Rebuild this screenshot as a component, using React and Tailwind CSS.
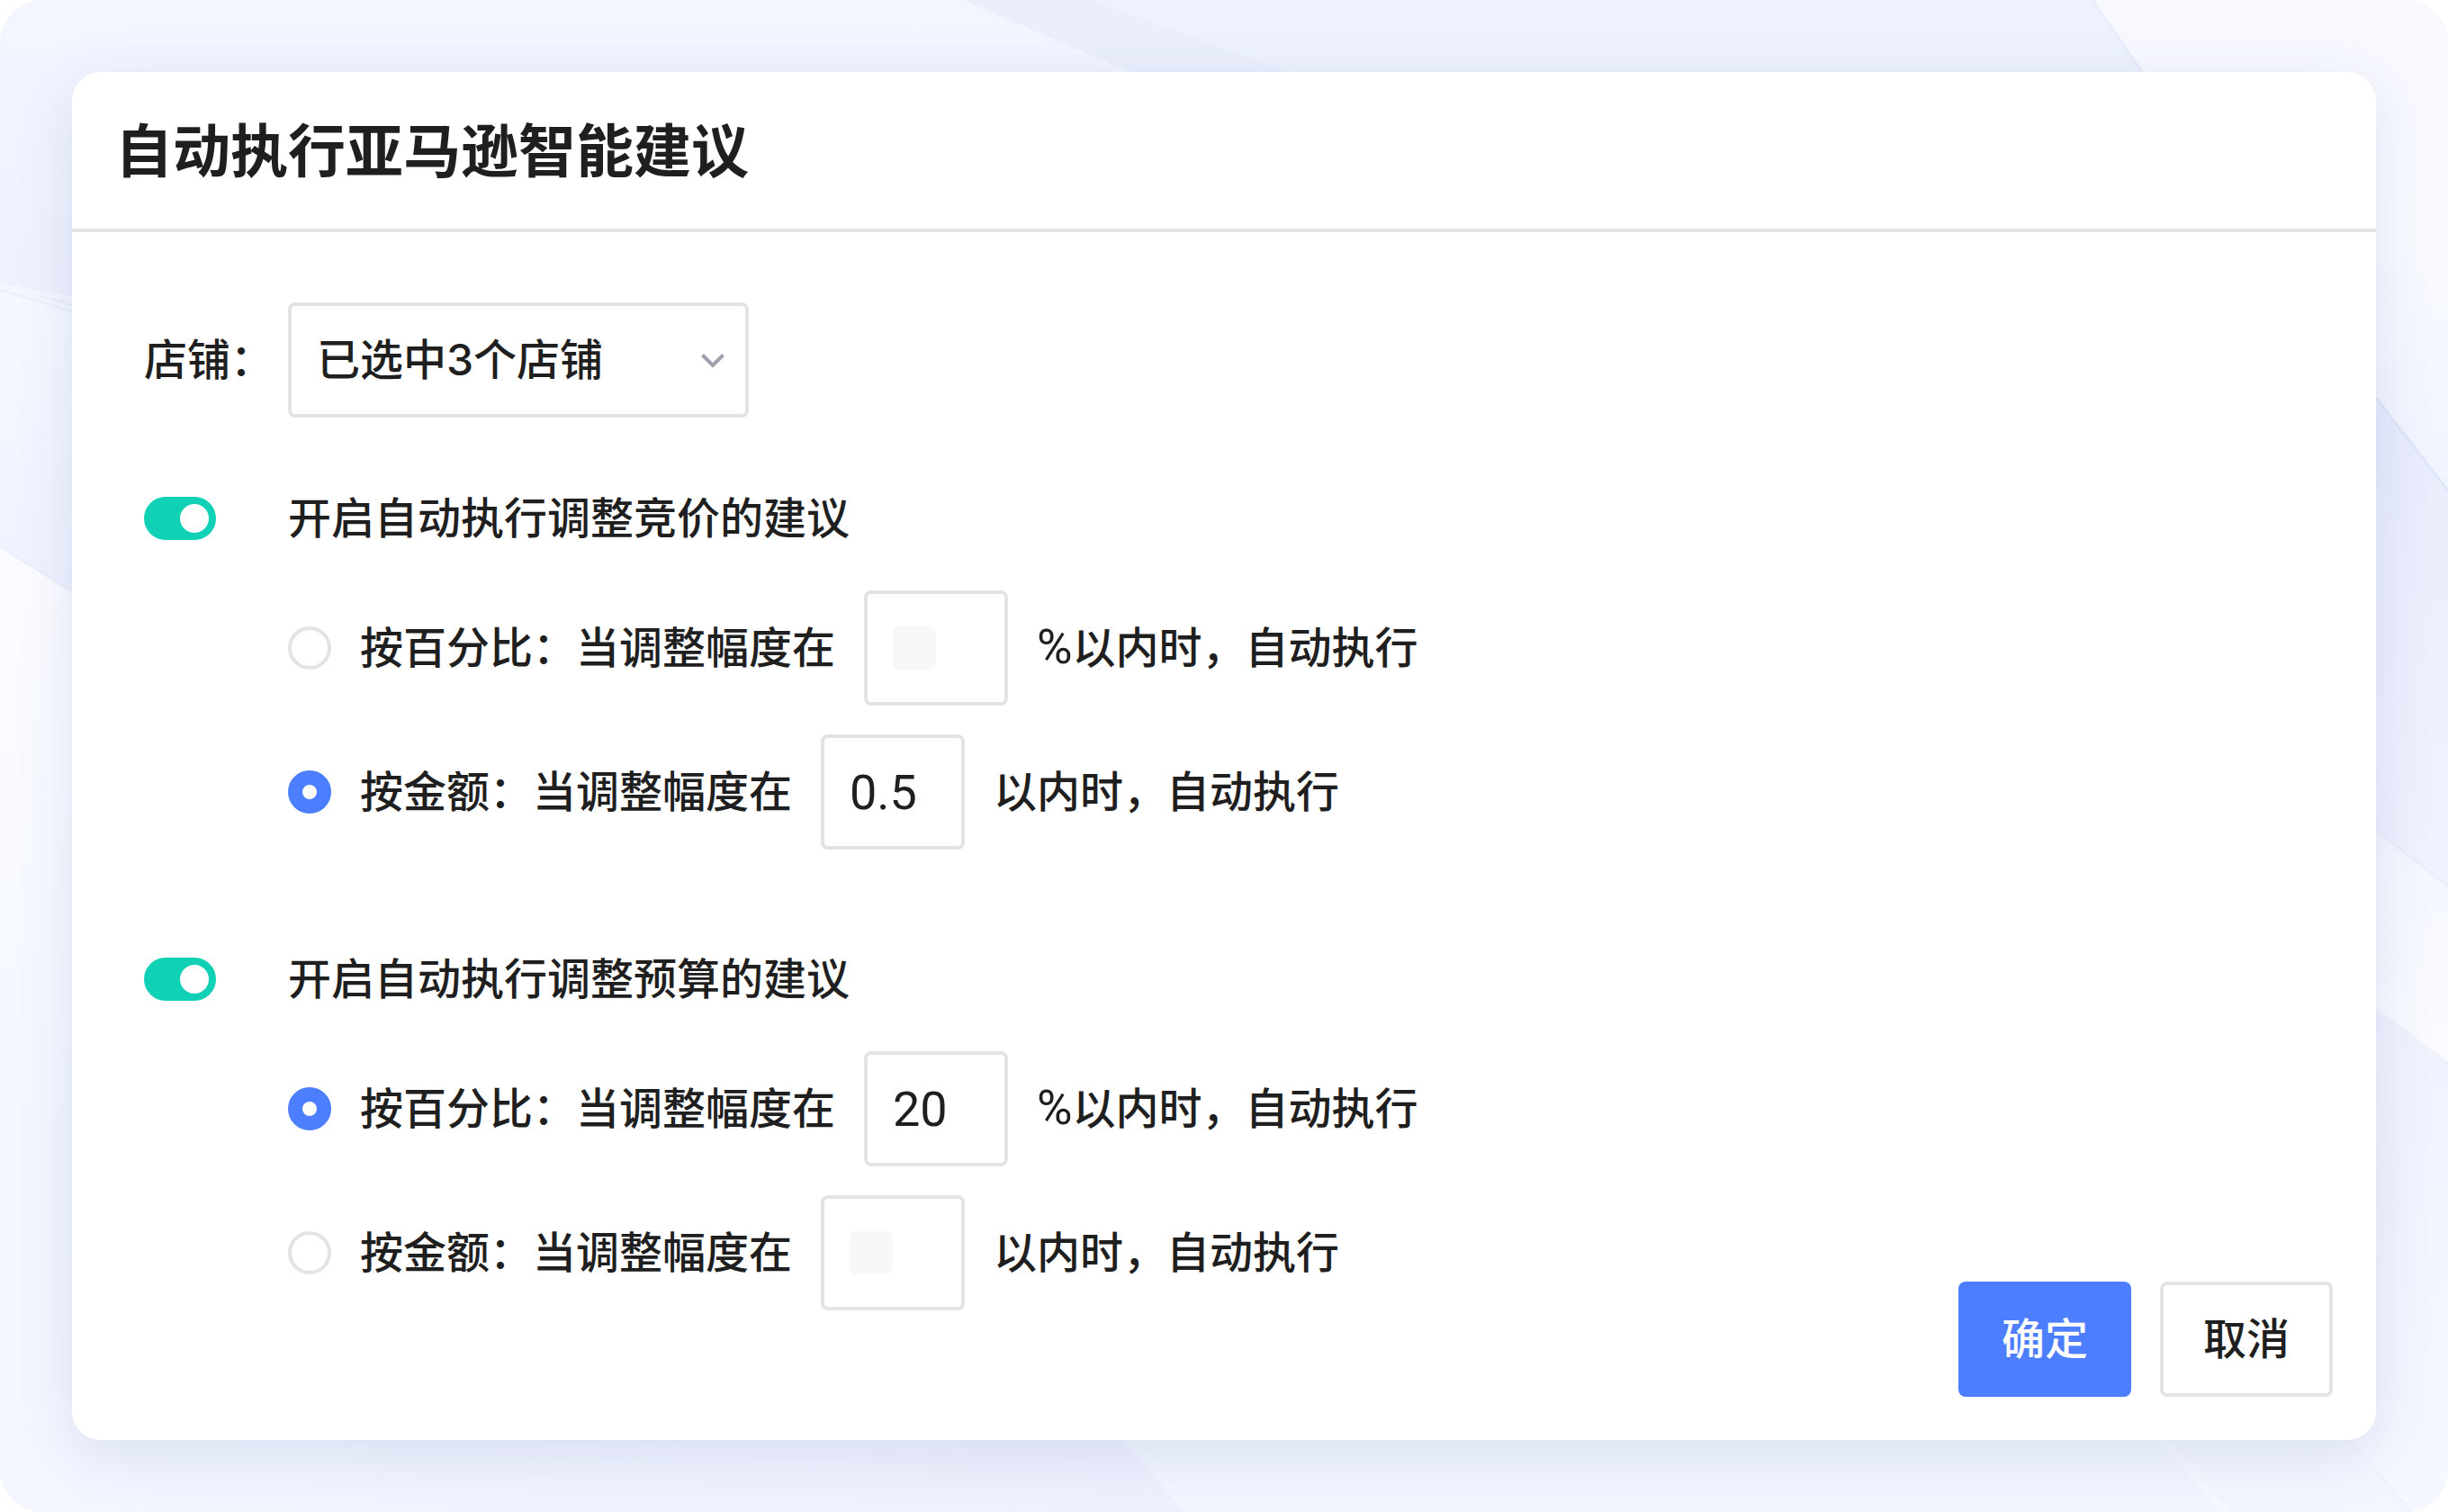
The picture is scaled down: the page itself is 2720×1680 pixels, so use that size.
import { useState } from "react";

function Backdrop() {
  return (
    <svg
      aria-hidden="true"
      viewBox="0 0 2720 1680"
      preserveAspectRatio="none"
      className="absolute inset-0 h-full w-full"
    >
      <defs>
        <linearGradient id="leftTop" x1="0" y1="0" x2="0" y2="1">
          <stop offset="0" stopColor="#f3f6ff" />
          <stop offset="0.45" stopColor="#eef1fd" />
          <stop offset="1" stopColor="#edf0fd" />
        </linearGradient>
        <linearGradient id="leftMid" x1="0" y1="0" x2="0" y2="1">
          <stop offset="0" stopColor="#f5f9ff" />
          <stop offset="0.5" stopColor="#eff2fe" />
          <stop offset="1" stopColor="#eff2fe" />
        </linearGradient>
        <linearGradient id="leftLow" x1="0" y1="0" x2="0" y2="1">
          <stop offset="0" stopColor="#fbfcff" />
          <stop offset="0.6" stopColor="#f3f7ff" />
          <stop offset="1" stopColor="#f4f7ff" />
        </linearGradient>
        <linearGradient id="rightTop" x1="0" y1="0" x2="0" y2="1">
          <stop offset="0" stopColor="#f8f9ff" />
          <stop offset="0.5" stopColor="#f8faff" />
          <stop offset="1" stopColor="#f0f4fe" />
        </linearGradient>
        <linearGradient id="rightDark" x1="0" y1="0" x2="0" y2="1">
          <stop offset="0" stopColor="#e5eafb" />
          <stop offset="1" stopColor="#f0f2fe" />
        </linearGradient>
        <linearGradient id="rightMid" x1="0" y1="0" x2="0" y2="1">
          <stop offset="0" stopColor="#f2f5fe" />
          <stop offset="1" stopColor="#f9fbff" />
        </linearGradient>
        <linearGradient id="rightLow" x1="0" y1="0" x2="0" y2="1">
          <stop offset="0" stopColor="#eef1fd" />
          <stop offset="1" stopColor="#f6f8ff" />
        </linearGradient>
        <linearGradient id="bottomLeft" x1="0" y1="0" x2="1" y2="0">
          <stop offset="0" stopColor="#f4f7ff" />
          <stop offset="0.5" stopColor="#f0f3fe" />
          <stop offset="1" stopColor="#eef0fd" />
        </linearGradient>
      </defs>
      <rect width="2720" height="1680" fill="#f1f4fe" />
      <polygon points="0,0 1350,0 1350,760 0,330" fill="url(#leftTop)" />
      <polygon points="1070,0 1215,0 1430,80 1430,300 1255,80" fill="#ebeffc" />
      <polygon points="1215,0 2325,0 2380,80 2380,300 1430,300 1430,80" fill="#eef2fe" />
      <polygon points="0,316 80,341 500,480 500,1000 80,657 0,607" fill="url(#leftMid)" />
      <polyline points="0,318 80,332" fill="none" stroke="#f4f7ff" strokeWidth="6" />
      <polyline points="0,322 80,346" fill="none" stroke="#eef1fd" strokeWidth="3" />
      <polygon points="0,607 80,657 500,920 500,1680 0,1680" fill="url(#leftLow)" />
      <polyline points="0,607 80,657" fill="none" stroke="#ecf0fc" strokeWidth="3" />
      <polygon points="2325,0 2720,0 2720,545 2640,442 2380,80" fill="url(#rightTop)" />
      <polyline points="2325,0 2380,80" fill="none" stroke="#e8ecfb" strokeWidth="3" />
      <polygon points="2500,262 2640,442 2720,545 2720,985 2640,922 2500,820" fill="url(#rightDark)" />
      <polyline points="2640,442 2720,545" fill="none" stroke="#e0e6fa" strokeWidth="3" />
      <polygon points="2500,820 2640,922 2720,985 2720,1180 2640,1120 2500,1020" fill="url(#rightMid)" />
      <polyline points="2640,922 2720,985" fill="none" stroke="#ebeefc" strokeWidth="3" />
      <polygon points="2500,1020 2640,1120 2720,1180 2720,1680 2500,1680" fill="url(#rightLow)" />
      <polygon points="0,1590 1245,1590 1325,1680 0,1680" fill="url(#bottomLeft)" />
      <polygon points="1245,1590 2396,1590 2485,1680 1325,1680" fill="#f2f5fe" />
      <polygon points="2396,1590 2600,1590 2680,1680 2485,1680" fill="#f3f6fe" />
      <polyline points="1250,1594 1322,1680" fill="none" stroke="#f3f6ff" strokeWidth="10" />
      <polyline points="2398,1594 2474,1680" fill="none" stroke="#f5f8ff" strokeWidth="10" />
      <polyline points="2610,1600 2680,1680" fill="none" stroke="#f0f3fc" strokeWidth="3" />
    </svg>
  );
}

function LimitRow({ id, group, label, unit, suffix, value, checked, onSelect, onChange }) {
  return (
    <div className="flex items-center gap-8">
      <input
        id={id}
        type="radio"
        name={group}
        checked={checked}
        onChange={onSelect}
        className="h-12 w-12 shrink-0 appearance-none rounded-full border-4 border-[#e3e3e3] bg-white checked:border-[16px] checked:border-[#4d7eff]"
      />
      <label htmlFor={id}>{label}</label>
      <div className="relative">
        <input
          type="text"
          aria-label={label}
          value={value}
          onChange={(e) => onChange(e.target.value)}
          className="block h-32 w-40 rounded-lg border-4 border-[#e3e3e3] bg-white px-7 font-['Roboto',sans-serif] text-[54px] font-normal text-[#1f1f1f] outline-none"
        />
        {value === "" && (
          <span className="pointer-events-none absolute top-10 left-8 h-12 w-12 rounded-lg bg-[#f8f8f8]" />
        )}
      </div>
      <span>
        {unit && (
          <span className="font-['Roboto',sans-serif] text-[54px] leading-none font-normal">{unit}</span>
        )}
        {suffix}
      </span>
    </div>
  );
}

function RuleGroup({ id, title, percent, amount, initial }) {
  const [enabled, setEnabled] = useState(true);
  const [mode, setMode] = useState(initial);
  const [values, setValues] = useState({ percent, amount });
  return (
    <section className="flex flex-col gap-12">
      <div className="flex items-center gap-20">
        <input
          id={id}
          type="checkbox"
          role="switch"
          checked={enabled}
          onChange={(e) => setEnabled(e.target.checked)}
          className="flex h-12 w-20 shrink-0 appearance-none items-center rounded-full bg-gray-300 px-2 before:h-8 before:w-8 before:rounded-full before:bg-white checked:justify-end checked:bg-[#10d0b5]"
        />
        <label htmlFor={id}>{title}</label>
      </div>
      <div className="flex flex-col gap-8 pl-40">
        <LimitRow
          id={`${id}-percent`}
          group={`${id}-mode`}
          label="按百分比：当调整幅度在"
          unit="%"
          suffix="以内时，自动执行"
          value={values.percent}
          checked={mode === "percent"}
          onSelect={() => setMode("percent")}
          onChange={(v) => setValues({ ...values, percent: v })}
        />
        <LimitRow
          id={`${id}-amount`}
          group={`${id}-mode`}
          label="按金额：当调整幅度在"
          suffix="以内时，自动执行"
          value={values.amount}
          checked={mode === "amount"}
          onSelect={() => setMode("amount")}
          onChange={(v) => setValues({ ...values, amount: v })}
        />
      </div>
    </section>
  );
}

export default function App() {
  return (
    <div className="min-h-screen bg-white">
      <div className="relative flex min-h-screen overflow-hidden rounded-[48px] p-20 font-['Inter','Noto_Sans_CJK_SC',sans-serif] text-5xl leading-[64px] font-medium text-[#1f1f1f]">
        <Backdrop />
        <main className="relative flex flex-1 flex-col rounded-[32px] bg-white shadow-[0_16px_64px_rgba(50,80,150,0.13)]">
          <header className="border-b-4 border-[#e3e3e3] px-12 pt-12 pb-[46px]">
            <h1 className="text-[64px] leading-[80px] font-bold">自动执行亚马逊智能建议</h1>
          </header>
          <div className="flex flex-1 items-start justify-between pt-[78px] pr-12 pb-12 pl-20">
            <form className="flex flex-col gap-20">
              <div className="flex items-center">
                <label htmlFor="shop" className="w-40">
                  店铺：
                </label>
                <div className="relative">
                  <select
                    id="shop"
                    className="block h-32 w-[512px] appearance-none rounded-lg border-4 border-[#e3e3e3] bg-white px-7 outline-none"
                  >
                    <option>已选中3个店铺</option>
                  </select>
                  <svg
                    aria-hidden="true"
                    viewBox="0 0 48 48"
                    className="pointer-events-none absolute top-10 right-4 h-12 w-12"
                    fill="none"
                    stroke="#9fa0ab"
                    strokeWidth="4"
                  >
                    <path d="M12.500 18.500 L24 30 L35.500 18.500" />
                  </svg>
                </div>
              </div>
              <div className="flex flex-col gap-28">
                <RuleGroup
                  id="bid"
                  title="开启自动执行调整竞价的建议"
                  percent=""
                  amount="0.5"
                  initial="amount"
                />
                <RuleGroup
                  id="budget"
                  title="开启自动执行调整预算的建议"
                  percent="20"
                  amount=""
                  initial="percent"
                />
              </div>
            </form>
            <div className="flex gap-8 self-end">
              <button
                type="button"
                className="h-32 w-48 rounded-lg bg-[#4d7eff] text-white"
              >
                确定
              </button>
              <button
                type="button"
                className="h-32 w-48 rounded-lg border-4 border-[#e3e3e3] bg-white"
              >
                取消
              </button>
            </div>
          </div>
        </main>
      </div>
    </div>
  );
}
